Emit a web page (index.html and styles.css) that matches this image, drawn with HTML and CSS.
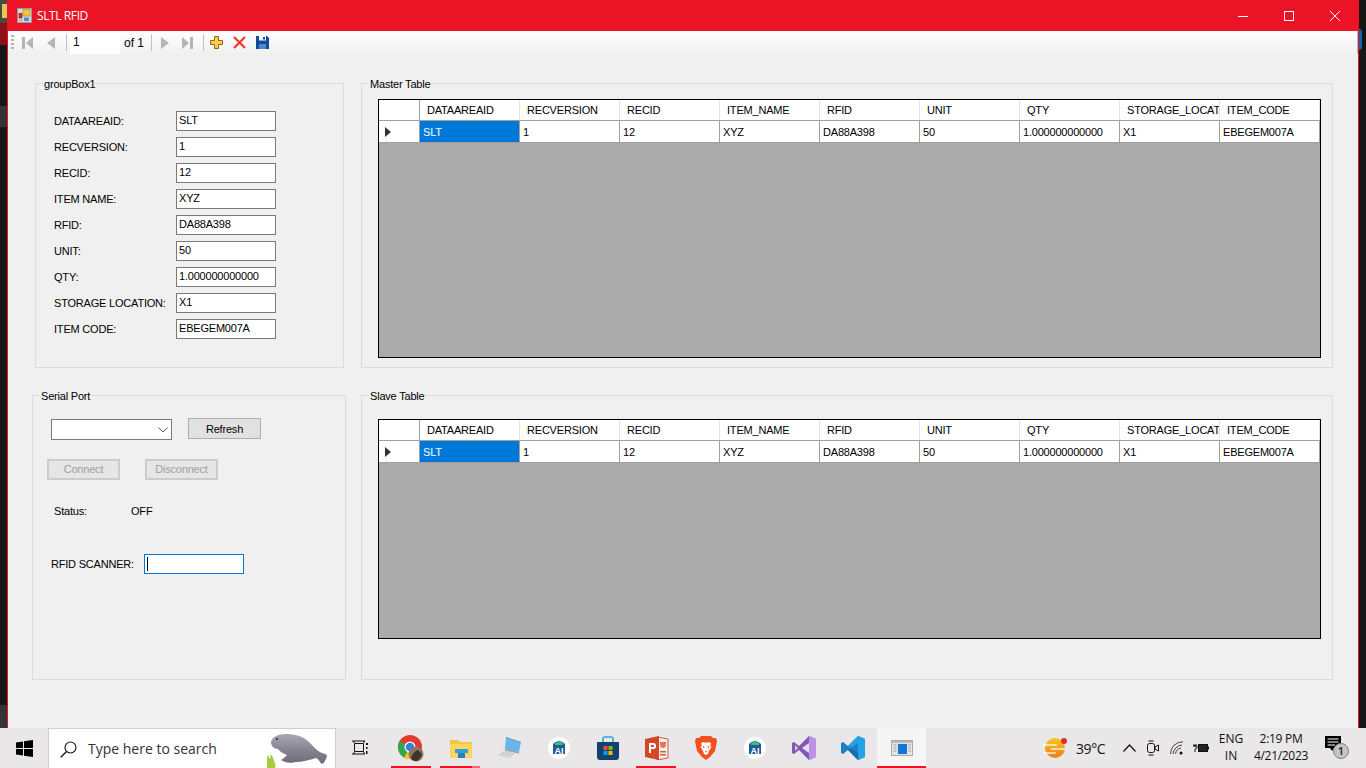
FILE: index.html
```html
<!DOCTYPE html>
<html lang="en">
<head>
<meta charset="utf-8">
<title>SLTL RFID</title>
<link rel="stylesheet" href="styles.css">
</head>
<body>
<div class="desktop">
  <div class="top">
    <div class="strip strip-left">
      <div class="seg s-a"><div class="yellow-tile"></div></div>
      <div class="seg s-b"></div>
      <div class="seg s-c"></div>
      <div class="seg s-d"></div>
      <div class="seg s-e"></div>
      <div class="seg s-f"></div>
    </div>
    <div class="window">
      <div class="titlebar">
        <svg class="app-icon" width="15" height="15" viewBox="0 0 15 15"><rect x="0.5" y="0.5" width="14" height="14" fill="#d8d8d8" stroke="#999"/><rect x="6" y="1.5" width="7" height="6.5" fill="#f3c338" stroke="#b58a1e" stroke-width=".6"/><rect x="2" y="5.5" width="3" height="4.5" fill="#d62a2a" stroke="#8c1a1a" stroke-width=".6"/><rect x="7" y="9.5" width="5" height="3.5" fill="#4a90e2"/><rect x="2" y="11.5" width="3" height="1.5" fill="#aaa"/></svg>
        <span class="app-title">SLTL RFID</span>
        <div class="win-controls">
          <div class="win-btn"><svg width="10" height="10" viewBox="0 0 10 10"><path d="M0 5.5H10" stroke="#fff" fill="none"/></svg></div>
          <div class="win-btn"><svg width="10" height="10" viewBox="0 0 10 10"><rect x=".5" y=".5" width="9" height="9" stroke="#fff" fill="none"/></svg></div>
          <div class="win-btn"><svg width="10" height="10" viewBox="0 0 10 10"><path d="M0 0L10 10M10 0L0 10" stroke="#fff" fill="none"/></svg></div>
        </div>
      </div>
      <div class="toolbar">
        <div class="gripper"></div>
        <div class="tool"><svg width="12" height="12" viewBox="0 0 12 12"><rect x="0" y="0" width="3" height="12" fill="#b4b4b4"/><path d="M11 0V12L4 6Z" fill="#b4b4b4"/></svg></div>
        <div class="tool"><svg width="8" height="12" viewBox="0 0 8 12"><path d="M8 0V12L0 6Z" fill="#b4b4b4"/></svg></div>
        <div class="sep sep-a"></div>
        <div class="pos-box">1</div>
        <div class="pos-of">of 1</div>
        <div class="sep sep-b"></div>
        <div class="tool"><svg width="8" height="12" viewBox="0 0 8 12"><path d="M0 0V12L8 6Z" fill="#b4b4b4"/></svg></div>
        <div class="tool"><svg width="11" height="12" viewBox="0 0 11 12"><path d="M0 0V12L7 6Z" fill="#b4b4b4"/><rect x="8" y="0" width="3" height="12" fill="#b4b4b4"/></svg></div>
        <div class="sep sep-c"></div>
        <div class="tool"><svg width="13" height="13" viewBox="0 0 13 13"><path d="M4.5 .5H8.500V4.500H12.500V8.500H8.500V12.500H4.500V8.500H.5V4.500H4.500Z" fill="#f8cf4e" stroke="#9a6a12"/></svg></div>
        <div class="tool"><svg width="13" height="13" viewBox="0 0 13 13"><path d="M1 1L12 12M12 1L1 12" stroke="#ee3a2a" stroke-width="2.200" fill="none"/></svg></div>
        <div class="tool"><svg width="13" height="13" viewBox="0 0 13 13"><path d="M0 0H11L13 2V13H0Z" fill="#0d4f9e"/><rect x="3" y="0" width="7" height="4.500" fill="#fff"/><rect x="7" y="1" width="2" height="2.500" fill="#0d4f9e"/><rect x="3" y="8" width="7" height="5" fill="#4f86c6"/></svg></div>
      </div>
      <div class="form">
        <div class="left-col">
          <section class="group group-one">
            <div class="group-title">groupBox1</div>
            <div class="field-grid">
              <div class="lbl">DATAAREAID:</div><div class="tb">SLT</div>
              <div class="lbl">RECVERSION:</div><div class="tb">1</div>
              <div class="lbl">RECID:</div><div class="tb">12</div>
              <div class="lbl">ITEM NAME:</div><div class="tb">XYZ</div>
              <div class="lbl">RFID:</div><div class="tb">DA88A398</div>
              <div class="lbl">UNIT:</div><div class="tb">50</div>
              <div class="lbl">QTY:</div><div class="tb">1.000000000000</div>
              <div class="lbl">STORAGE LOCATION:</div><div class="tb">X1</div>
              <div class="lbl">ITEM CODE:</div><div class="tb">EBEGEM007A</div>
            </div>
          </section>
          <section class="group group-serial">
            <div class="group-title">Serial Port</div>
            <div class="serial-row1">
              <div class="combo"><svg width="10" height="6" viewBox="0 0 10 6"><path d="M.5 .5L5 5L9.500 .5" stroke="#555" fill="none"/></svg></div>
              <div class="btn">Refresh</div>
            </div>
            <div class="serial-row2">
              <div class="btn btn-off">Connect</div>
              <div class="btn btn-off">Disconnect</div>
            </div>
            <div class="serial-row3"><div class="status-lbl">Status:</div><div>OFF</div></div>
            <div class="serial-row4"><div class="scan-lbl">RFID SCANNER:</div><div class="tb tb-focus"><span class="caret"></span></div></div>
          </section>
        </div>
        <div class="right-col">
          <section class="group group-table">
            <div class="group-title">Master Table</div>
            <div class="dgv dgv-master">
              <div class="dgv-row dgv-head">
                <div class="corner"></div><div class="hc">DATAAREAID</div><div class="hc">RECVERSION</div><div class="hc">RECID</div><div class="hc">ITEM_NAME</div><div class="hc">RFID</div><div class="hc">UNIT</div><div class="hc">QTY</div><div class="hc">STORAGE_LOCAT</div><div class="hc">ITEM_CODE</div>
              </div>
              <div class="dgv-row dgv-data">
                <div class="rowhead"><svg width="6" height="10" viewBox="0 0 6 10"><path d="M0 0V10L6 5Z" fill="#333"/></svg></div><div class="dc dc-sel">SLT</div><div class="dc">1</div><div class="dc">12</div><div class="dc">XYZ</div><div class="dc">DA88A398</div><div class="dc">50</div><div class="dc">1.000000000000</div><div class="dc">X1</div><div class="dc">EBEGEM007A</div>
              </div>
            </div>
          </section>
          <section class="group group-table group-slave">
            <div class="group-title">Slave Table</div>
            <div class="dgv dgv-slave">
              <div class="dgv-row dgv-head">
                <div class="corner"></div><div class="hc">DATAAREAID</div><div class="hc">RECVERSION</div><div class="hc">RECID</div><div class="hc">ITEM_NAME</div><div class="hc">RFID</div><div class="hc">UNIT</div><div class="hc">QTY</div><div class="hc">STORAGE_LOCAT</div><div class="hc">ITEM_CODE</div>
              </div>
              <div class="dgv-row dgv-data">
                <div class="rowhead"><svg width="6" height="10" viewBox="0 0 6 10"><path d="M0 0V10L6 5Z" fill="#333"/></svg></div><div class="dc dc-sel">SLT</div><div class="dc">1</div><div class="dc">12</div><div class="dc">XYZ</div><div class="dc">DA88A398</div><div class="dc">50</div><div class="dc">1.000000000000</div><div class="dc">X1</div><div class="dc">EBEGEM007A</div>
              </div>
            </div>
          </section>
        </div>
      </div>
    </div>
    <div class="strip strip-right">
      <div class="seg r-a"></div>
      <div class="seg r-b"></div>
      <div class="seg r-c"></div>
    </div>
  </div>
  <div class="taskbar">
    <div class="start"><svg width="17" height="17" viewBox="0 0 17 17"><path d="M0 2.400L7 1.400V8H0ZM8 1.200L17 0V8H8ZM0 9H7V15.600L0 14.600ZM8 9H17V17L8 15.800Z" fill="#000"/></svg></div>
    <div class="search">
      <svg class="search-glass" width="17" height="17" viewBox="0 0 17 17"><circle cx="10.500" cy="6.500" r="5.500" fill="none" stroke="#111" stroke-width="1.100"/><path d="M6.500 10.500L.8 16.300" stroke="#111" stroke-width="1.300"/></svg>
      <span class="search-text">Type here to search</span>
      <svg class="manatee" width="64" height="40" viewBox="0 0 64 40">
        <defs><linearGradient id="mg" x1="0" y1="0" x2="0" y2="1"><stop offset="0" stop-color="#aba8b6"/><stop offset=".55" stop-color="#85828f"/><stop offset="1" stop-color="#6e6b76"/></linearGradient></defs>
        <path d="M0 40C0 34 -1 30 1 26L3 30L4 25C6 29 7 29 7 34C8 30 9 36 8 40Z" fill="#a6cc3e"/>
        <path d="M4 13C5 8 11 5 18 5C28 5 36 7 42 13C47 18 50 22 55 24C58 25 60 25 60 27C59 31 57 34 55 35C53 34 53 31 49 29C42 31 36 33 28 33C23 35 17 33 14 31C16 30 18 28 20 26C17 25 13 23 11 20C7 20 4 17 4 13Z" fill="url(#mg)"/>
        <circle cx="10" cy="10" r="1" fill="#222"/>
      </svg>
    </div>
    <div class="taskview"><svg width="16" height="16" viewBox="0 0 16 16"><path d="M2.500 3.500H11.500V11.500H2.500ZM0 1H13M0 14H13M2 1V3M12 1V3M2 12V14M12 12V14" stroke="#111" fill="none"/><rect x="14" y="3" width="2" height="2" fill="#111"/><rect x="14" y="7" width="1.500" height="2" fill="#111"/><rect x="14" y="11" width="1.500" height="3" fill="#111"/></svg></div>
    <div class="apps">
      <div class="app app-on">
        <svg width="30" height="28" viewBox="0 0 30 28"><circle cx="13" cy="13" r="12" fill="#e33b2e"/><path d="M13 13L23.400 19A12 12 0 0 1 7 23.400Z" fill="#f8c91c"/><path d="M13 13L7 23.400A12 12 0 0 1 2.600 7Z" fill="#2fa84f"/><circle cx="13" cy="13" r="5.500" fill="#fff"/><circle cx="13" cy="13" r="4.300" fill="#3b7ded"/><circle cx="19" cy="20" r="7.500" fill="#8a7563"/><path d="M14 24C16 19 18 17 21 16L25 20C24 24 21 27 19 27C17 27 15 26 14 24Z" fill="#3e342c"/></svg>
      </div>
      <div class="app app-run">
        <svg width="22" height="20" viewBox="0 0 22 20"><path d="M0 2H8L10 4H22V20H0Z" fill="#f6c544"/><rect x="0" y="6" width="22" height="14" fill="#fbd75f"/><rect x="5" y="11" width="13" height="4" fill="#3a9bdc"/><rect x="8" y="15" width="7" height="5" fill="#2a7fbf"/></svg>
      </div>
      <div class="app">
        <svg width="24" height="22" viewBox="0 0 24 22"><path d="M8 0L23 5L21 15L7 12Z" fill="#62b8ec"/><path d="M8 0L23 5V6L8 1Z" fill="#8d9aa3"/><path d="M7 12L21 15V16.500L7 13.500Z" fill="#9a9a9a"/><path d="M6 13.500L18 16L11 21L0 18.500Z" fill="#d2d2d2"/></svg>
      </div>
      <div class="app">
        <svg width="22" height="22" viewBox="0 0 22 22"><circle cx="11" cy="11" r="11" fill="#fff"/><path d="M5 7Q11 1 17 7V17H5Z" fill="#1d5d90"/><path d="M7 6Q11 3 15 6L15 8H7Z" fill="#45b88e"/><text x="11" y="17" class="ai-text">AI</text></svg>
      </div>
      <div class="app">
        <svg width="24" height="24" viewBox="0 0 24 24"><path d="M7 7V3Q7 1 9 1H15Q17 1 17 3V7" fill="none" stroke="#2aa7df" stroke-width="1.600"/><path d="M1 6H23V21Q23 24 20 24H4Q1 24 1 21Z" fill="#14426f"/><rect x="7.500" y="10" width="4" height="4" fill="#f25022"/><rect x="12.500" y="10" width="4" height="4" fill="#7fba00"/><rect x="7.500" y="15" width="4" height="4" fill="#00a4ef"/><rect x="12.500" y="15" width="4" height="4" fill="#ffb900"/></svg>
      </div>
      <div class="app app-on">
        <svg width="24" height="24" viewBox="0 0 24 24"><path d="M12 1L23 3V22L12 24Z" fill="#f2f2f2" stroke="#d9583a"/><rect x="15" y="6" width="6" height="2" fill="#d9583a"/><rect x="15" y="15" width="6" height="1.500" fill="#d9583a"/><rect x="15" y="18" width="6" height="1.500" fill="#d9583a"/><path d="M15 9A3 3 0 1 0 21 9A3 3 0 1 0 15 9" fill="#e57b5c"/><path d="M0 3L14 0V24L0 21Z" fill="#d24726"/><path d="M4 7H8.500Q11 7 11 10Q11 13 8.500 13H6V17H4ZM6 9V11H8.500Q9 11 9 10Q9 9 8.500 9Z" fill="#fff"/></svg>
      </div>
      <div class="app">
        <svg width="22" height="24" viewBox="0 0 22 24"><path d="M6 0H16L18 2L21 2L22 5L20 15L15 21L11 24L7 21L2 15L0 5L1 2L4 2Z" fill="#f4511e"/><path d="M6 7L9 6L11 7L13 6L16 7L15 11L17 10L14 15L13 18L11 19L9 18L8 15L5 10L7 11Z" fill="#fff"/><path d="M8 10L10 11L8 12ZM14 10L12 11L14 12ZM10 15H12L11 17Z" fill="#f4511e"/></svg>
      </div>
      <div class="app">
        <svg width="22" height="22" viewBox="0 0 22 22"><circle cx="11" cy="11" r="11" fill="#fff"/><path d="M5 7Q11 1 17 7V17H5Z" fill="#1d5d90"/><path d="M7 6Q11 3 15 6L15 8H7Z" fill="#45b88e"/><text x="11" y="17" class="ai-text">AI</text></svg>
      </div>
      <div class="app">
        <svg width="24" height="24" viewBox="0 0 24 24"><path d="M17 0L24 3V21L17 24L7 14L2 18L0 17V7L2 6L7 10Z" fill="#7f58b8"/><path d="M17 0L24 3V21L17 24Z" fill="#bd92e6"/><path d="M17 7V17L10 12Z" fill="#e8d9f7"/><path d="M3 9L6 12L3 15Z" fill="#d9c5f0"/></svg>
      </div>
      <div class="app">
        <svg width="24" height="24" viewBox="0 0 24 24"><path d="M17 0L24 3V21L17 24L7 14L2 18L0 17V7L2 6L7 10Z" fill="#1f7fc4"/><path d="M17 0L24 3V21L17 24V7L10 12L7 10Z" fill="#22a2ea"/><path d="M17 17V24L7 14L10 12Z" fill="#1a6ea8"/></svg>
      </div>
      <div class="app app-active">
        <svg width="22" height="16" viewBox="0 0 22 16"><rect x="0.500" y="0.500" width="21" height="15" fill="#e4e4e4" stroke="#aaa"/><rect x="1" y="1" width="20" height="2" fill="#bbb"/><rect x="7" y="4" width="9" height="10" fill="#0f78d6"/><path d="M2.500 5H5.500M2.500 8H5.500M2.500 11H5.500M17.500 5H20M17.500 8H20M17.500 11H20" stroke="#999"/></svg>
      </div>
    </div>
    <div class="tray">
      <div class="t-weather"><svg width="26" height="22" viewBox="0 0 26 22"><defs><linearGradient id="wg" x1="0" y1="0" x2="0" y2="1"><stop offset="0" stop-color="#f8c622"/><stop offset="1" stop-color="#ee7f18"/></linearGradient></defs><circle cx="12" cy="11" r="10" fill="url(#wg)"/><path d="M0 8H14M8 12H24M0 16H13" stroke="#fff" stroke-width="1.300" opacity=".85"/><circle cx="21" cy="4" r="3" fill="#d9302a"/></svg></div>
      <div class="t-temp">39°C</div>
      <div class="t-icon"><svg width="13" height="8" viewBox="0 0 13 8"><path d="M.5 7.500L6.500 1L12.500 7.500" stroke="#111" stroke-width="1.200" fill="none"/></svg></div>
      <div class="t-icon"><svg width="12" height="16" viewBox="0 0 12 16"><rect x=".5" y="3.500" width="7" height="9" rx="2" fill="none" stroke="#111"/><path d="M8 7L11.500 5V11L8 9ZM1.500 1H6.500M1.500 15H6.500" stroke="#111" fill="none"/></svg></div>
      <div class="t-icon"><svg width="14" height="14" viewBox="0 0 14 14"><path d="M.5 13A12 12 0 0 1 13 .8M3 13A10 10 0 0 1 12 4M5.500 13A7 7 0 0 1 11 7" stroke="#444" fill="none"/><circle cx="11" cy="12" r="1.500" fill="#111"/></svg></div>
      <div class="t-icon"><svg width="16" height="10" viewBox="0 0 16 10"><path d="M1 1V3H3V1M0 3H4V5L2 6V9" stroke="#111" fill="none"/><rect x="5.500" y="1.500" width="9" height="7" fill="#222" stroke="#111"/><rect x="15" y="3.500" width="1" height="3" fill="#111"/></svg></div>
      <div class="t-lang"><div>ENG</div><div>IN</div></div>
      <div class="t-clock"><div>2:19 PM</div><div>4/21/2023</div></div>
      <div class="t-note"><svg width="26" height="26" viewBox="0 0 26 26"><path d="M0 1H16V13H9L7 16L5 13H0Z" fill="#000"/><path d="M2.500 4H13.500M2.500 7H13.500M2.500 10H10" stroke="#fff"/><circle cx="16" cy="16" r="7.500" fill="#c4c4c4" stroke="#808080"/><text x="16" y="20" class="badge-text">1</text></svg></div>
    </div>
  </div>
</div>
</body>
</html>
```

FILE: styles.css
```css
* { box-sizing: border-box; }
html, body { margin: 0; padding: 0; }
body { width: 1366px; height: 768px; overflow: hidden; font-family: "Liberation Sans", Arial, sans-serif; font-size: 11px; color: #000; }

.desktop { width: 1366px; height: 768px; display: flex; flex-direction: column; background: #141414; }
.top { height: 728px; display: flex; }

.strip { width: 7px; display: flex; flex-direction: column; background: #141414; }
.seg { flex: none; }
.s-a { height: 23px; background: #4a4a3c; padding-top: 4px; }
.yellow-tile { width: 5px; height: 14px; margin-left: 2px; background: #e3c65a; }
.s-b { height: 22px; background: #8d0f19; }
.s-c { height: 61px; background: #171717; }
.s-d { height: 21px; background: #333; }
.s-e { height: 578px; background: #171717; }
.s-f { height: 23px; background: #343434; }
.r-a { height: 29px; background: #161616; }
.r-b { height: 21px; width: 3px; background: #1464a8; border-radius: 0 10px 10px 0; }
.r-c { flex: 1; background: #171717; }

.window { width: 1352px; display: flex; flex-direction: column; border-left: 1px solid #eb1326; border-right: 1px solid #eb1326; background: #f0f0f0; }

.titlebar { height: 31px; flex: none; display: flex; align-items: center; background: #eb1326; color: #fff; padding-left: 9px; }
.app-icon { flex: none; }
.app-title { margin-left: 5px; font-family: "Open Sans", sans-serif; font-size: 12px; letter-spacing: -.4px; }
.win-controls { margin-left: auto; display: flex; height: 31px; }
.win-btn { width: 46px; display: flex; align-items: center; justify-content: center; }

.toolbar { height: 23px; flex: none; display: flex; align-items: center; padding-left: 3px; background: linear-gradient(#ffffff, #f0f0f0); border-right: 1px solid #b8b8b8; font-size: 12px; }
.gripper { width: 3px; height: 15px; margin-right: 2px; background: repeating-linear-gradient(#b4b4b4 0 2px, transparent 2px 4px); }
.tool { width: 23px; height: 23px; display: flex; align-items: center; justify-content: center; }
.sep { width: 1px; height: 17px; background: #c0c0c0; }
.sep-a { margin: 0 3px 0 4px; }
.sep-b { margin: 0 1px 0 0; }
.sep-c { margin: 0 1px 0 4px; }
.pos-box { width: 50px; height: 23px; background: #fff; padding-left: 3px; line-height: 23px; }
.pos-of { width: 31px; padding-left: 4px; }

.form { flex: 1; display: flex; gap: 15px; padding: 29px 0 0 24px; letter-spacing: -.2px; }
.left-col, .right-col { display: flex; flex-direction: column; gap: 27px; }
.left-col { width: 314px; }
.right-col { width: 972px; }

.group { position: relative; height: 285px; border: 1px solid #dcdcdc; }
.group-title { position: absolute; top: -7px; left: 7px; height: 14px; line-height: 14px; padding: 0 1px; background: #f0f0f0; white-space: nowrap; }
.group-one { width: 309px; margin-left: 3px; padding: 27px 0 0 18px; }
.group-serial { padding: 22px 0 0 14px; }
.group-table { padding: 15px 0 0 16px; }
.group-slave { padding-top: 23px; }

.field-grid { display: grid; grid-template-columns: 122px 100px; row-gap: 6px; align-items: center; }
.lbl { white-space: nowrap; padding-bottom: 1px; }
.tb { width: 100px; height: 20px; background: #fff; border: 1px solid #7a7a7a; padding-left: 2px; line-height: 17px; }
.tb-focus { border-color: #0078d7; display: flex; align-items: center; }
.caret { width: 1px; height: 14px; background: #000; }

.serial-row1 { display: flex; gap: 16px; margin-left: 4px; }
.combo { width: 121px; height: 21px; margin-top: 1px; background: #fff; border: 1px solid #7a7a7a; display: flex; align-items: center; justify-content: flex-end; padding-right: 3px; }
.btn { width: 73px; height: 21px; display: flex; align-items: center; justify-content: center; background: #e1e1e1; border: 1px solid #adadad; }
.btn-off { border: 2px solid #cccccc; color: #a0a0a0; background: #e6e6e6; padding-bottom: 1px; }
.serial-row2 { display: flex; gap: 25px; margin-top: 19px; }
.serial-row3 { display: flex; margin: 24px 0 0 7px; height: 14px; line-height: 14px; }
.status-lbl { width: 77px; }
.serial-row4 { display: flex; align-items: center; margin: 36px 0 0 4px; }
.scan-lbl { width: 93px; white-space: nowrap; padding-bottom: 1px; }

.dgv { width: 943px; border: 1px solid #000; background: #ababab; overflow: hidden; }
.dgv-master { height: 259px; }
.dgv-slave { height: 220px; }
.dgv-row { display: grid; grid-template-columns: 41px repeat(9, 100px); width: 941px; }
.dgv-head { height: 21px; background: #fff; border-bottom: 1px solid #a0a0a0; }
.dgv-data { height: 22px; background: #fff; border-bottom: 1px solid #a0a0a0; }
.corner { border-right: 1px solid #a0a0a0; }
.hc { padding: 1px 0 0 7px; line-height: 19px; border-right: 1px solid #e4e4e4; white-space: nowrap; overflow: hidden; }
.rowhead { border-right: 1px solid #a0a0a0; display: flex; align-items: center; padding-left: 6px; }
.dc { padding: 1px 0 0 3px; line-height: 20px; border-right: 1px solid #a0a0a0; white-space: nowrap; overflow: hidden; }
.dc-sel { background: #0078d7; color: #fff; }

.taskbar { height: 40px; flex: none; display: flex; background: #e9e7e7; font-family: "Open Sans", "Noto Sans", sans-serif; color: #111; }
.start { width: 48px; display: flex; align-items: center; justify-content: center; padding-top: 1px; }
.search { position: relative; width: 288px; background: #fff; border: 1px solid #cfcfcf; border-bottom: 0; display: flex; align-items: center; padding-left: 11px; }
.search-glass { flex: none; margin-top: 2px; }
.search-text { margin-left: 11px; font-size: 14px; color: #333; }
.manatee { position: absolute; right: 4px; top: 0; }
.taskview { width: 51px; display: flex; align-items: center; justify-content: center; padding-right: 3px; }
.apps { display: flex; }
.app { width: 49px; height: 40px; display: flex; align-items: center; justify-content: center; position: relative; }
.app-on::after, .app-run::after, .app-active::after { content: ""; position: absolute; bottom: 0; height: 2px; background: #eb1326; }
.app-on::after { left: 4px; right: 5px; }
.app-run::after { left: 4px; right: 5px; background: linear-gradient(90deg, #eb1326 80%, #ef6a78 80%); }
.app-active { background: #f5f5f5; }
.app-active::after { left: 0; right: 0; }
.ai-text { font-family: "Liberation Sans", sans-serif; font-size: 9px; font-weight: 700; fill: #fff; text-anchor: middle; }
.badge-text { font-family: "Open Sans", sans-serif; font-size: 11px; fill: #222; text-anchor: middle; font-weight: 600; }

.tray { margin-left: auto; display: flex; align-items: center; height: 40px; font-size: 12px; }
.t-weather { width: 32px; display: flex; justify-content: center; }
.t-temp { width: 45px; padding-left: 4px; font-size: 14px; letter-spacing: -.4px; }
.t-icon { width: 24px; display: flex; justify-content: center; align-items: center; }
.t-lang { width: 36px; text-align: center; line-height: 17px; padding-bottom: 2px; }
.t-clock { width: 64px; text-align: center; line-height: 17px; padding-bottom: 2px; letter-spacing: -.3px; }
.t-note { width: 53px; padding: 7px 0 0 12px; height: 40px; }
```
